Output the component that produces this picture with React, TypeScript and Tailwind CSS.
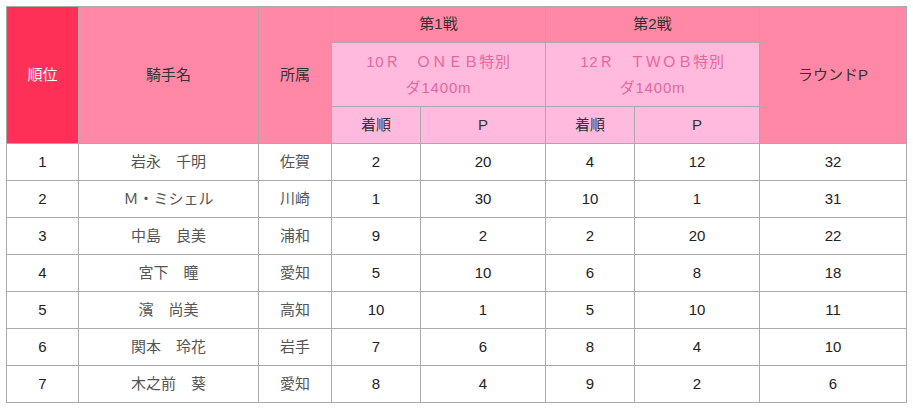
const rows = [
  { rank: 1, name: "岩永　千明", pref: "佐賀", r1: 2, p1: 20, r2: 4, p2: 12, total: 32 },
  { rank: 2, name: "Ｍ・ミシェル", pref: "川崎", r1: 1, p1: 30, r2: 10, p2: 1, total: 31 },
  { rank: 3, name: "中島　良美", pref: "浦和", r1: 9, p1: 2, r2: 2, p2: 20, total: 22 },
  { rank: 4, name: "宮下　瞳", pref: "愛知", r1: 5, p1: 10, r2: 6, p2: 8, total: 18 },
  { rank: 5, name: "濱　尚美", pref: "高知", r1: 10, p1: 1, r2: 5, p2: 10, total: 11 },
  { rank: 6, name: "関本　玲花", pref: "岩手", r1: 7, p1: 6, r2: 8, p2: 4, total: 10 },
  { rank: 7, name: "木之前　葵", pref: "愛知", r1: 8, p1: 4, r2: 9, p2: 2, total: 6 },
];

const cell = "border border-[#aaaaaa] text-center align-middle";

export default function App() {
  return (
    <div
      className="bg-white w-[913px] h-[410px] pt-[6px] pl-[6px] text-[15px] text-[#222]"
      style={{ fontFamily: '"Liberation Sans", Arial, "Noto Sans CJK JP", sans-serif' }}
    >
      <table className="border-collapse table-fixed w-[900px]">
        <colgroup>
          <col className="w-[72px]" />
          <col className="w-[180px]" />
          <col className="w-[73px]" />
          <col className="w-[89px]" />
          <col className="w-[125px]" />
          <col className="w-[89px]" />
          <col className="w-[125px]" />
          <col className="w-[147px]" />
        </colgroup>
        <thead>
          <tr className="h-[36px]">
            <th rowSpan={3} className={`${cell} bg-[#ff3057] text-white font-normal`}>順位</th>
            <th rowSpan={3} className={`${cell} bg-[#ff88a6] text-[#333] font-normal`}>騎手名</th>
            <th rowSpan={3} className={`${cell} bg-[#ff88a6] text-[#333] font-normal`}>所属</th>
            <th colSpan={2} className={`${cell} bg-[#ff88a6] text-[#333] font-normal`}>第1戦</th>
            <th colSpan={2} className={`${cell} bg-[#ff88a6] text-[#333] font-normal`}>第2戦</th>
            <th rowSpan={3} className={`${cell} bg-[#ff88a6] text-[#333] font-normal`}>ラウンドP</th>
          </tr>
          <tr className="h-[64px]">
            <th colSpan={2} className={`${cell} bg-[#ffbadd] text-[#e2689c] font-normal leading-[26px] tracking-[0.8px]`}>
              10Ｒ　ＯＮＥＢ特別
              <br />
              ダ1400m
            </th>
            <th colSpan={2} className={`${cell} bg-[#ffbadd] text-[#e2689c] font-normal leading-[26px] tracking-[0.8px]`}>
              12Ｒ　ＴＷＯＢ特別
              <br />
              ダ1400m
            </th>
          </tr>
          <tr className="h-[37px]">
            <th className={`${cell} bg-[#ffbadd] text-[#333] font-normal`}>着順</th>
            <th className={`${cell} bg-[#ffbadd] text-[#333] font-normal`}>P</th>
            <th className={`${cell} bg-[#ffbadd] text-[#333] font-normal`}>着順</th>
            <th className={`${cell} bg-[#ffbadd] text-[#333] font-normal`}>P</th>
          </tr>
        </thead>
        <tbody>
          {rows.map((r) => (
            <tr key={r.rank} className="h-[37px]">
              <td className={cell}>{r.rank}</td>
              <td className={`${cell} text-[#555]`}>{r.name}</td>
              <td className={`${cell} text-[#555]`}>{r.pref}</td>
              <td className={cell}>{r.r1}</td>
              <td className={cell}>{r.p1}</td>
              <td className={cell}>{r.r2}</td>
              <td className={cell}>{r.p2}</td>
              <td className={cell}>{r.total}</td>
            </tr>
          ))}
        </tbody>
      </table>
    </div>
  );
}
